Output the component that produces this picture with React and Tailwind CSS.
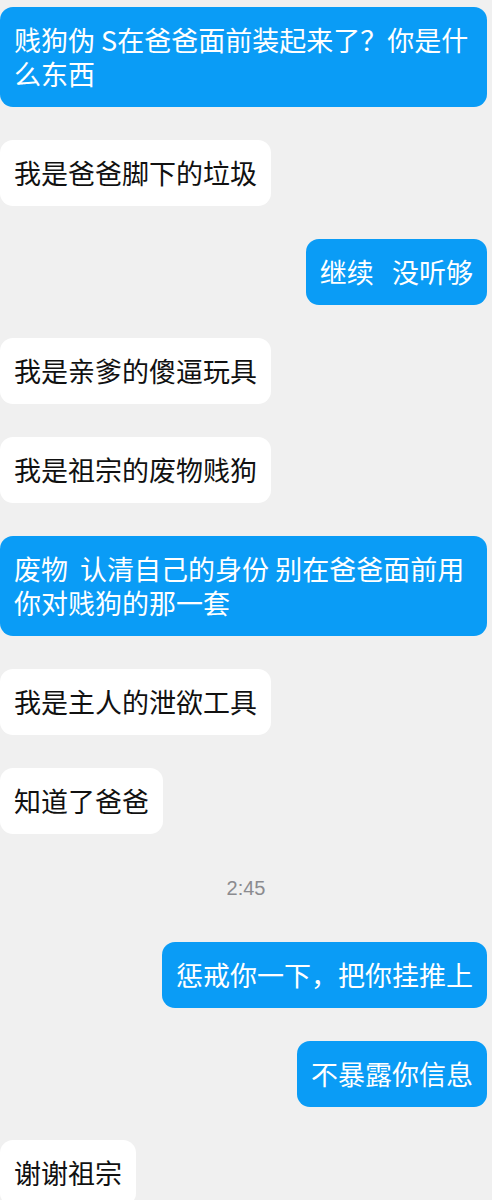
import React from "react";

const messages = [
  { me: true, text: "贱狗伪 S在爸爸面前装起来了？你是什么东西" },
  { me: false, text: "我是爸爸脚下的垃圾" },
  { me: true, text: "继续   没听够" },
  { me: false, text: "我是亲爹的傻逼玩具" },
  { me: false, text: "我是祖宗的废物贱狗" },
  { me: true, text: "废物  认清自己的身份 别在爸爸面前用你对贱狗的那一套" },
  { me: false, text: "我是主人的泄欲工具" },
  { me: false, text: "知道了爸爸" },
  { time: "2:45" },
  { me: true, text: "惩戒你一下，把你挂推上" },
  { me: true, text: "不暴露你信息" },
  { me: false, text: "谢谢祖宗" },
];

const Bubble = ({ me, text }) => (
  <div className={me ? "flex justify-end pr-[5px]" : "flex justify-start"}>
    <div
      className={
        me
          ? "max-w-[487px] rounded-[13px] bg-[#0a9cf6] px-[14px] py-[16px] text-[27px] leading-[34px] text-white whitespace-pre-wrap"
          : "max-w-[487px] rounded-[13px] bg-white px-[14px] py-[16px] text-[27px] leading-[34px] text-[#111] whitespace-pre-wrap"
      }
    >
      {text}
    </div>
  </div>
);

export default function App() {
  return (
    <div
      className="min-h-[1200px] w-[492px] overflow-hidden bg-[#f0f0f0] pt-[7px] flex flex-col gap-[33px]"
      style={{ fontFamily: '"Noto Sans CJK SC", "Noto Sans", sans-serif' }}
    >
      {messages.map((m, i) =>
        m.time ? (
          <div
            key={i}
            className="my-[9px] text-center text-[20px] leading-[24px] text-[#8b8b8f]"
            style={{ fontFamily: '"Liberation Sans", sans-serif' }}
          >
            {m.time}
          </div>
        ) : (
          <Bubble key={i} me={m.me} text={m.text} />
        )
      )}
    </div>
  );
}
